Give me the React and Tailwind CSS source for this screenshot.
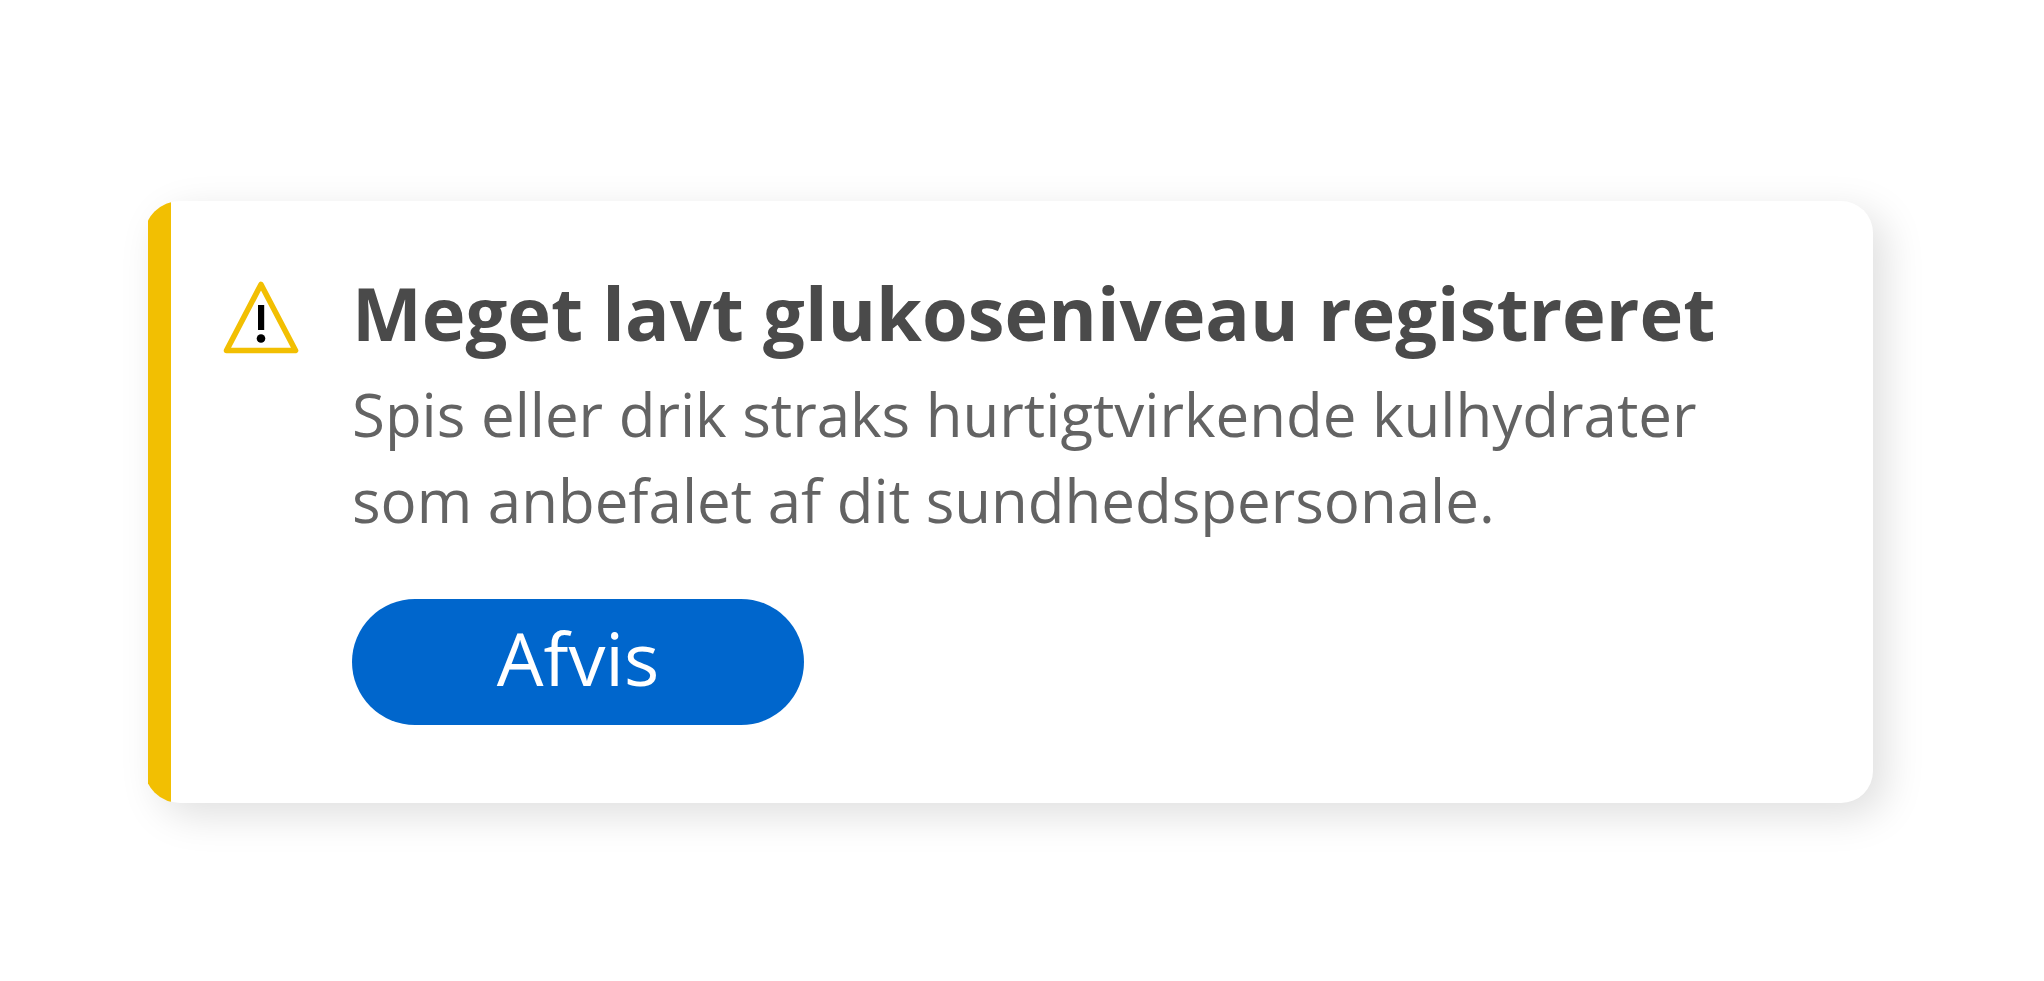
import { useState } from 'react';

function WarningIcon() {
  return (
    <svg viewBox="0 0 76 73" className="w-[76px] h-[73px] shrink-0" fill="none" aria-hidden="true">
      <path d="M38 3.5 L72.5 69.5 H3.5 Z" stroke="#f2bf02" strokeWidth="5.6" strokeLinejoin="round" />
      <rect x="35" y="24" width="6.2" height="25" fill="#000" />
      <circle cx="38" cy="57.5" r="4.3" fill="#000" />
    </svg>
  );
}

function AlertCard({ title, message, action, onDismiss }) {
  return (
    <section
      role="alert"
      className="flex w-full bg-white rounded-[32px] shadow-[12px_12px_40px_rgba(0,0,0,0.13)]"
    >
      {/* Accent bar */}
      <div className="flex w-[23px] shrink-0 overflow-hidden">
        <div className="w-16 -ml-1 shrink-0 rounded-l-[36px] bg-[#f2bf02]" />
      </div>

      <div className="flex flex-1 gap-[53px] pl-[52px] pt-[66px] pb-[78px]">
        <div className="pt-[14px]">
          <WarningIcon />
        </div>
        <div className="flex-1">
          <h1 className="mb-3 text-[74px] leading-[92px] font-bold text-[#4a4a4a]">{title}</h1>
          <p className="max-w-[1400px] text-[60px] leading-[86px] text-[#636363]">{message}</p>
          <button
            type="button"
            onClick={onDismiss}
            className="mt-14 w-[452px] h-[126px] pb-2 rounded-full bg-[#0066cc] text-[74px] leading-[86px] font-medium text-white"
          >
            {action}
          </button>
        </div>
      </div>
    </section>
  );
}

export default function App() {
  const [open, setOpen] = useState(true);

  return (
    <main className="min-h-screen bg-white pt-[201px] pb-[178px] pl-[148px] pr-[171px] font-['Open_Sans',sans-serif]">
      {open && (
        <AlertCard
          title="Meget lavt glukoseniveau registreret"
          message="Spis eller drik straks hurtigtvirkende kulhydrater som anbefalet af dit sundhedspersonale."
          action="Afvis"
          onDismiss={() => setOpen(false)}
        />
      )}
    </main>
  );
}
